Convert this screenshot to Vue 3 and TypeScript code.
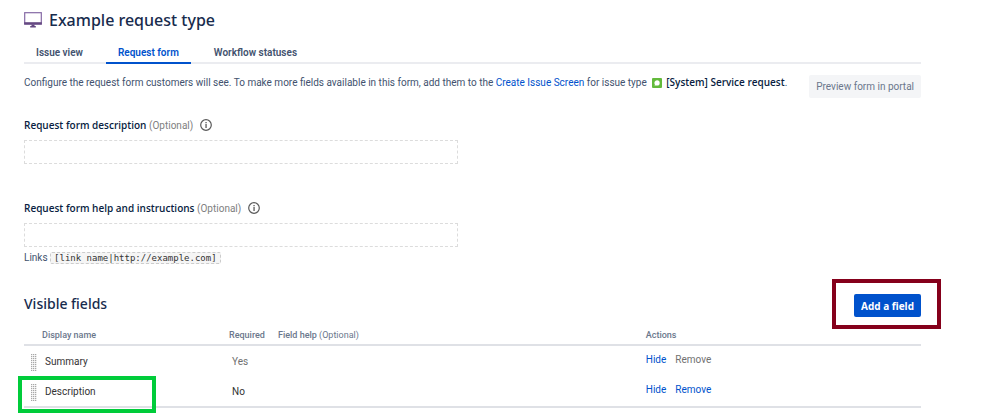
<script setup lang="ts">
import { ref } from 'vue'

interface Tab {
  id: string
  label: string
}

interface Field {
  name: string
  required: boolean
  removable: boolean
  marked: boolean
}

const tabs: Tab[] = [
  { id: 'issue', label: 'Issue view' },
  { id: 'form', label: 'Request form' },
  { id: 'workflow', label: 'Workflow statuses' },
]
const activeTab = ref('form')
const description = ref('')
const instructions = ref('')

const fields = ref<Field[]>([
  { name: 'Summary', required: true, removable: false, marked: false },
  { name: 'Description', required: false, removable: true, marked: true },
])
</script>

<template>
  <main class="page">
    <header class="title-bar">
      <svg class="title-icon" viewBox="0 0 18 16" aria-hidden="true">
        <rect x="0.7" y="0.7" width="16.6" height="11.3" fill="#fff" stroke="#8569a5" stroke-width="1.2" />
        <rect x="0.2" y="10.2" width="17.6" height="2.4" fill="#654982" />
        <path d="M7.5 12.6h3v1.4h1.3v1.6H6.2V14h1.3z" fill="#654982" />
      </svg>
      <h1>Example request type</h1>
    </header>

    <nav class="tabs">
      <a
        v-for="tab in tabs"
        :key="tab.id"
        :href="'#' + tab.id"
        :class="{ active: tab.id === activeTab }"
        @click.prevent="activeTab = tab.id"
      >{{ tab.label }}</a>
    </nav>

    <section class="intro">
      <p>
        Configure the request form customers will see. To make more fields available in this form, add them to the
        <a href="#screen">Create Issue Screen</a> for issue type
        <svg class="type-icon" viewBox="0 0 10 10" aria-hidden="true">
          <rect width="10" height="10" rx="1" fill="#63ba3c" />
          <path d="M5 2.2a2.7 2.7 0 0 1 2.7 2.7A2.7 2.7 0 0 1 5 7.6H2.5l.4-1.1A2.7 2.7 0 0 1 5 2.2z" fill="#fff" />
        </svg>
        <strong>[System] Service request</strong>.
      </p>
      <button type="button" class="button subtle">Preview form in portal</button>
    </section>

    <section class="group">
      <div class="label-row">
        <label for="description">Request form description <span>(Optional)</span></label>
        <svg class="info" viewBox="0 0 12 12" aria-hidden="true">
          <circle cx="6" cy="6" r="5.3" fill="none" stroke="#5a5a5a" stroke-width="1.2" />
          <path d="M5.4 2.9h1.3v1.3H5.4zM5.4 5.1h1.3v3.8H5.4z" fill="#5a5a5a" />
        </svg>
      </div>
      <input id="description" v-model="description" type="text" />
    </section>

    <section class="group">
      <div class="label-row">
        <label for="instructions">Request form help and instructions <span>(Optional)</span></label>
        <svg class="info" viewBox="0 0 12 12" aria-hidden="true">
          <circle cx="6" cy="6" r="5.3" fill="none" stroke="#5a5a5a" stroke-width="1.2" />
          <path d="M5.4 2.9h1.3v1.3H5.4zM5.4 5.1h1.3v3.8H5.4z" fill="#5a5a5a" />
        </svg>
      </div>
      <input id="instructions" v-model="instructions" type="text" />
      <div class="hint">Links <code>[link name|http://example.com]</code></div>
    </section>

    <section class="fields">
      <div class="fields-head">
        <h2>Visible fields</h2>
        <div class="callout">
          <button type="button" class="button primary">Add a field</button>
        </div>
      </div>
      <table>
        <colgroup>
          <col class="col-name" />
          <col class="col-required" />
          <col class="col-help" />
          <col />
        </colgroup>
        <thead>
          <tr>
            <th class="name">Display name</th>
            <th>Required</th>
            <th>Field help <span>(Optional)</span></th>
            <th>Actions</th>
          </tr>
        </thead>
        <tbody>
          <tr v-for="field in fields" :key="field.name">
            <td>
              <div class="field-name" :class="{ marked: field.marked }">
                <svg class="grip" viewBox="0 0 6 17" aria-hidden="true">
                  <template v-for="row in 9" :key="row">
                    <rect
                      v-for="col in 3"
                      :key="col"
                      :x="(col - 1) * 2"
                      :y="(row - 1) * 2"
                      width="1.3"
                      height="1.2"
                      fill="#a8a8a8"
                    />
                  </template>
                </svg>
                <span>{{ field.name }}</span>
              </div>
            </td>
            <td class="required" :class="{ muted: field.required }">{{ field.required ? 'Yes' : 'No' }}</td>
            <td></td>
            <td>
              <div class="actions">
                <a href="#hide">Hide</a>
                <a v-if="field.removable" href="#remove">Remove</a>
                <span v-else class="muted">Remove</span>
              </div>
            </td>
          </tr>
        </tbody>
      </table>
    </section>
  </main>
</template>

<style>
body {
  margin: 0;
  background: #fff;
}
</style>

<style scoped>
.page {
  padding: 8px 78px 8px 24px;
  font: 10px/16px Roboto, "Open Sans", sans-serif;
  color: #42526e;
}

a {
  color: #0052cc;
  text-decoration: none;
}

.title-bar {
  display: flex;
  align-items: center;
  gap: 7px;
  height: 24px;
}

.title-icon {
  width: 18px;
  height: 16px;
}

h1,
h2 {
  margin: 0;
  font-family: "Noto Sans", "Open Sans", sans-serif;
  font-weight: 500;
  color: #172b4d;
}

h1 {
  font-size: 16px;
  line-height: 24px;
}

h2 {
  font-size: 14px;
  line-height: 20px;
}

.tabs {
  display: flex;
  margin-top: 10px;
  gap: 11px;
  border-bottom: 2px solid #ebecf0;
}

.tabs a {
  padding: 3px 12px 1px;
  margin-bottom: -2px;
  border-bottom: 2px solid transparent;
  font-weight: 600;
  color: #42526e;
}

.tabs a.active {
  border-color: #0052cc;
  color: #0052cc;
}

.intro {
  display: flex;
  justify-content: space-between;
  align-items: flex-start;
  padding-top: 11px;
}

.intro p {
  margin: 0;
}

.intro strong {
  font-family: "Open Sans", sans-serif;
  font-weight: 600;
  line-height: 12px;
  color: #091e42;
}

.type-icon {
  width: 10px;
  height: 10px;
  margin: 0 4px 0 3px;
  vertical-align: -2px;
}

.button {
  height: 23px;
  padding: 0 7px;
  border: 0;
  border-radius: 2px;
  font: inherit;
  white-space: nowrap;
}

.subtle {
  background: #f4f5f7;
  color: #6b778c;
}

.primary {
  background: #0052cc;
  color: #fff;
  font-family: "Open Sans", sans-serif;
  font-weight: 700;
}

.group {
  padding-top: 19px;
}

.group + .group {
  padding-top: 36px;
}

.label-row {
  display: flex;
  align-items: center;
  gap: 7px;
  height: 16px;
}

label {
  font-family: "Open Sans", sans-serif;
  font-weight: 600;
  color: #091e42;
}

label span {
  font-family: Roboto, sans-serif;
  font-weight: 400;
  color: #808080;
}

.info {
  width: 12px;
  height: 12px;
}

input {
  display: block;
  box-sizing: border-box;
  width: 434px;
  max-width: 100%;
  height: 24px;
  margin: 7px 0 0;
  padding: 0 6px;
  border: 1px dashed #dcdcdc;
  background: #fff;
  font: inherit;
}

.hint {
  margin-top: 3px;
}

code {
  padding: 0 3px;
  border: 1px dashed #ccc;
  border-radius: 2px;
  background: #f5f5f5;
  font: 9px/12px "DejaVu Sans Mono", monospace;
  color: #333;
}

.fields {
  padding-top: 28px;
}

.fields-head {
  display: flex;
  align-items: flex-start;
  justify-content: space-between;
  height: 24px;
}

.callout {
  position: relative;
  display: flex;
}

.callout::after {
  content: "";
  position: absolute;
  inset: -15px -20px -12px -22px;
  border: 4px solid #85001b;
  pointer-events: none;
}

table {
  width: 100%;
  margin-top: 8px;
  table-layout: fixed;
  border-collapse: separate;
  border-spacing: 0;
  border-bottom: 2px solid #dfe1e6;
}

.col-name {
  width: 205px;
}

.col-required {
  width: 49px;
}

.col-help {
  width: 41%;
}

th {
  padding: 1px 0;
  border-bottom: 2px solid #dfe1e6;
  font-size: 9px;
  font-weight: 500;
  text-align: left;
  color: #6b778c;
}

th span {
  font-weight: 400;
}

th.name {
  padding-left: 18px;
}

td {
  height: 28px;
  padding: 2px 0 0;
  color: #333;
}

.field-name {
  position: relative;
  display: flex;
  align-items: center;
  gap: 8px;
  padding-left: 7px;
}

.marked::after {
  content: "";
  position: absolute;
  inset: -8px 73px -12px -6px;
  border: 4px solid #00cc3a;
}

.grip {
  width: 6px;
  height: 17px;
}

td.required {
  padding-left: 3px;
}

.muted {
  color: #707070;
}

.actions {
  display: flex;
  gap: 9px;
  padding-bottom: 5px;
}
</style>
